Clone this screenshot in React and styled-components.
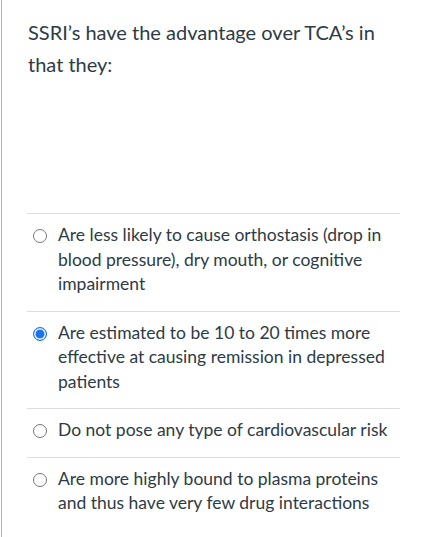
import React, { useState } from 'react';
import styled, { createGlobalStyle } from 'styled-components';

const GlobalStyle = createGlobalStyle`
    html, body {
        margin: 0;
        padding: 0;
        background: #ffffff;
    }
    body {
        font-family: Lato, "Open Sans", sans-serif;
        color: #2d3b45;
    }
`;

const answers = [
    "Are less likely to cause orthostasis (drop in blood pressure), dry mouth, or cognitive impairment",
    "Are estimated to be 10 to 20 times more effective at causing remission in depressed patients",
    "Do not pose any type of cardiovascular risk",
    "Are more highly bound to plasma proteins and thus have very few drug interactions",
];

const App = () => {
    const [picked, setPicked] = useState(1);

    return (
        <>
            <GlobalStyle />
            <StyledQuestion>
                <QuestionText>SSRI’s have the advantage over TCA’s in that they:</QuestionText>
                <AnswerList>
                    {answers.map((text, i) => (
                        <Answer key={i}>
                            <Radio
                                type="radio"
                                name="answer"
                                checked={picked === i}
                                onChange={() => setPicked(i)}
                            />
                            <AnswerText>{text}</AnswerText>
                        </Answer>
                    ))}
                </AnswerList>
            </StyledQuestion>
        </>
    )
}

const StyledQuestion = styled.div`
    margin-left: 1px;
    border-left: 1px solid #b3b3b3;
    min-height: 537px;
    box-sizing: border-box;
    padding: 16px 24px 0 25px;
`;

const QuestionText = styled.div`
    font-size: 20px;
    line-height: 32px;
    color: #2d3b45;
    margin: 0 0 133px 1px;
    padding-right: 24px;
`;

const AnswerList = styled.div`
    display: flex;
    flex-direction: column;
    width: 373px;
`;

const Answer = styled.label`
    display: flex;
    align-items: flex-start;
    border-top: 1px solid #dddddd;
    padding: 9px 0 14px 0;
    cursor: pointer;
`;

const Radio = styled.input`
    appearance: none;
    -webkit-appearance: none;
    flex: none;
    width: 14px;
    height: 14px;
    margin: 6px 0 0 6px;
    border: 1px solid #767676;
    border-radius: 50%;
    box-sizing: border-box;
    background: #ffffff;

    &:checked {
        border: 1.5px solid #1a73f0;
        background: #1a73f0;
        box-shadow: inset 0 0 0 1.5px #ffffff;
    }
`;

const AnswerText = styled.span`
    font-size: 17.5px;
    line-height: 24.5px;
    color: #2d3b45;
    margin-left: 11px;
`;

export default App
